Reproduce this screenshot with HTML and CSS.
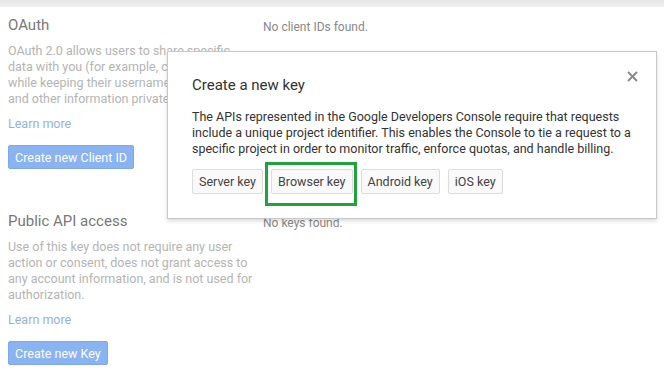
FILE: index.html
```html
<!DOCTYPE html>
<html lang="en">
<head>
  <meta charset="UTF-8">
  <title>Credentials</title>
  <link rel="stylesheet" href="styles.css">
</head>
<body>

  <div class="topbar"></div>

  <div class="page">

    <!-- OAuth row -->
    <div class="row">
      <div class="side">
        <h2>OAuth</h2>
        <p>OAuth 2.0 allows users to share specific data with you (for example, contact lists) while keeping their usernames, passwords, and other information private.</p>
        <a href="#" class="learn">Learn more</a>
        <button class="btn-blue">Create new Client ID</button>
      </div>
      <div class="main">
        <p class="empty">No client IDs found.</p>
      </div>
    </div>

    <!-- Public API row -->
    <div class="row">
      <div class="side">
        <h2>Public API access</h2>
        <p>Use of this key does not require any user action or consent, does not grant access to any account information, and is not used for authorization.</p>
        <a href="#" class="learn">Learn more</a>
        <button class="btn-blue">Create new Key</button>
      </div>
      <div class="main">
        <p class="empty">No keys found.</p>
      </div>
    </div>

    <!-- Dialog -->
    <div class="dialog">
      <svg class="close" width="11" height="11" viewBox="0 0 11 11">
        <path d="M1 1 L10 10 M10 1 L1 10" stroke="#8a8a8a" stroke-width="2"/>
      </svg>
      <h3>Create a new key</h3>
      <p>The APIs represented in the Google Developers Console require that requests include a unique project identifier. This enables the Console to tie a request to a specific project in order to monitor traffic, enforce quotas, and handle billing.</p>
      <div class="key-buttons">
        <button class="btn">Server key</button>
        <span class="picked">
          <button class="btn">Browser key</button>
          <span class="highlight"></span>
        </span>
        <button class="btn">Android key</button>
        <button class="btn">iOS key</button>
      </div>
    </div>

  </div>

</body>
</html>
```

FILE: styles.css
```css
body {
  margin: 0;
  font-family: Roboto, Arial, sans-serif;
  background: #fff;
  color: #333;
  width: 664px;
  height: 378px;
  overflow: hidden;
}

.topbar {
  height: 7px;
  background: linear-gradient(#e6e6e6, #f0f0f0);
}

.page {
  position: relative;
}

.row {
  display: flex;
  margin-bottom: 34px;
}

.row:last-child {
  margin-bottom: 0;
}

.side {
  width: 247px;
  padding-left: 8px;
}

.side h2 {
  font-size: 15px;
  font-weight: normal;
  color: #777;
  margin: 9px 0 9px;
}

.side p {
  font-size: 12.5px;
  line-height: 16px;
  color: #b4b4b4;
  margin: 0 0 9px;
}

.learn {
  display: block;
  font-size: 12.5px;
  color: #93b1de;
  text-decoration: none;
  margin-bottom: 14px;
}

.btn-blue {
  font-family: inherit;
  font-size: 12.5px;
  color: #fff;
  background: #8ab3f1;
  border: 1px solid #7fa8e6;
  border-radius: 2px;
  padding: 0 6px;
  height: 24px;
}

.main {
  padding-left: 8px;
}

.empty {
  font-size: 12px;
  color: #888;
  margin: 13px 0 0;
}

/* Dialog */
.dialog {
  position: absolute;
  left: 167px;
  top: 44px;
  width: 464px;
  height: 146px;
  padding: 20px 0 0 24px;
  background: #fff;
  border: 1px solid #c8c8c8;
  box-shadow: 0 2px 4px rgba(0, 0, 0, 0.15);
}

.close {
  position: absolute;
  right: 18px;
  top: 19px;
}

.dialog h3 {
  font-size: 15px;
  font-weight: normal;
  color: #333;
  margin: 4px 0 15px;
}

.dialog p {
  font-size: 12.5px;
  line-height: 16px;
  color: #333;
  margin: 0 0 12px;
}

.key-buttons {
  display: flex;
  gap: 8px;
}

.btn {
  font-family: inherit;
  font-size: 12.5px;
  color: #444;
  background: #f9f9f9;
  border: 1px solid #dcdcdc;
  border-radius: 2px;
  height: 25px;
  padding: 0 6px;
}

.picked {
  position: relative;
  display: flex;
}

.highlight {
  position: absolute;
  left: -6px;
  right: -4px;
  top: -7px;
  bottom: -12px;
  border: 3px solid #21a33b;
}
```
